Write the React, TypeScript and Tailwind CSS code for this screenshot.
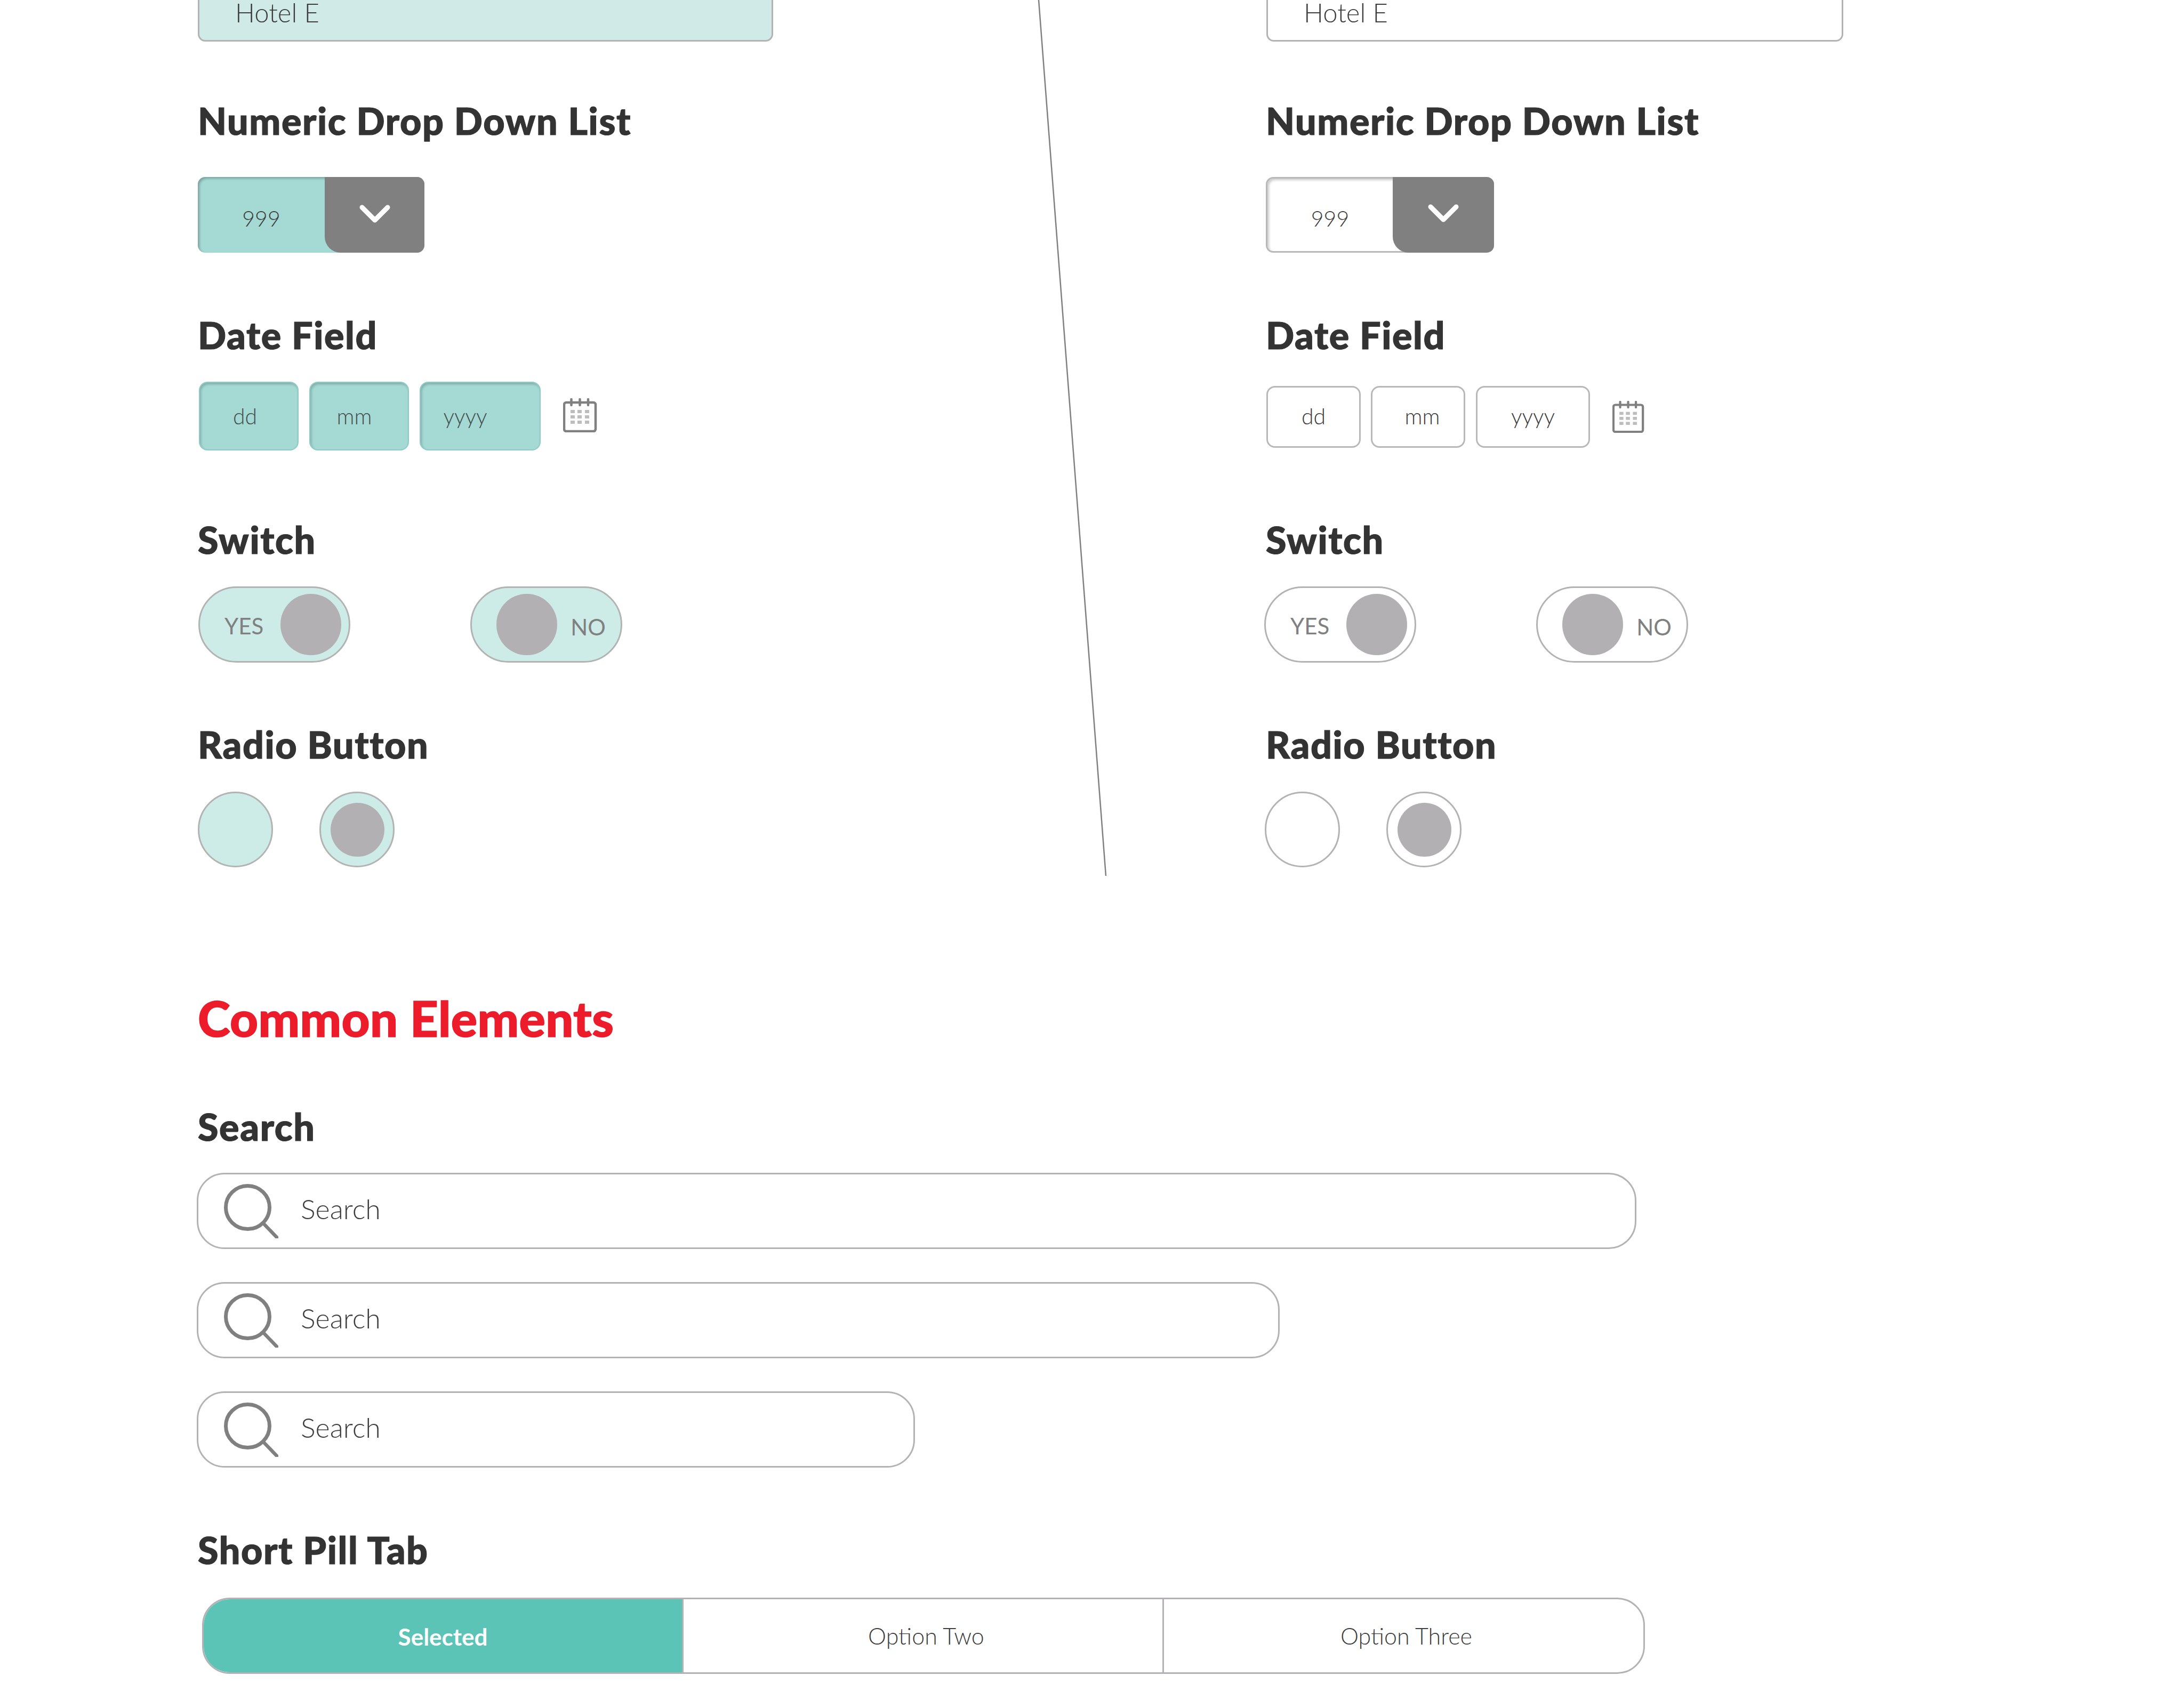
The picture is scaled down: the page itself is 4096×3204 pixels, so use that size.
import React from "react";

function Heading({ children, className = "" }: { children: React.ReactNode; className?: string }) {
  return (
    <h2 className={`h-[68px] text-[70px] leading-[68px] font-black tracking-[1.6px] text-[#333333] [-webkit-text-stroke:1.2px_#333333] ${className}`}>
      {children}
    </h2>
  );
}

function Chevron() {
  return (
    <svg width="58" height="35" viewBox="0 0 58 35" fill="none">
      <path d="M5 5 L29 29 L53 5" stroke="#ffffff" strokeWidth="9" strokeLinecap="round" strokeLinejoin="round" />
    </svg>
  );
}

function DropDown({ filled }: { filled: boolean }) {
  return (
    <div
      className={
        filled
          ? "flex h-[142px] w-[425px] rounded-[14px] bg-[#a4d9d4] shadow-[inset_3px_3px_4px_rgba(0,0,0,0.25)]"
          : "flex h-[142px] w-[428px] rounded-[14px] border-[3px] border-[#b8b8b8] bg-white shadow-[inset_3px_3px_4px_rgba(0,0,0,0.2)]"
      }
    >
      <div className="flex flex-1 items-center justify-center pt-[14px] text-[41px] font-light text-[#3d3d3d]">999</div>
      <div
        className={
          filled
            ? "flex w-[187px] items-center justify-center rounded-tr-[14px] rounded-br-[14px] rounded-bl-[30px] bg-[#808080] pb-[3px]"
            : "-my-[3px] -mr-[3px] flex w-[190px] items-center justify-center rounded-tr-[14px] rounded-br-[14px] rounded-bl-[30px] bg-[#808080] pb-[6px]"
        }
      >
        <Chevron />
      </div>
    </div>
  );
}

function CalendarIcon({ className = "" }: { className?: string }) {
  return (
    <svg className={className} width="64" height="64" viewBox="0 0 64 64" fill="none">
      <rect x="2" y="8" width="59" height="54" rx="4" stroke="#808080" strokeWidth="4.5" />
      <path d="M15.5 2 V13 M31.5 2 V13 M47 2 V13" stroke="#808080" strokeWidth="4.5" strokeLinecap="round" />
      <g fill="#bdbdbd">
        <rect x="14" y="22" width="8" height="6" />
        <rect x="27" y="22" width="8" height="6" />
        <rect x="41" y="22" width="8" height="6" />
        <rect x="14" y="32" width="8" height="6" />
        <rect x="27" y="32" width="8" height="6" />
        <rect x="41" y="32" width="8" height="6" />
        <rect x="14" y="42" width="8" height="6" />
        <rect x="27" y="42" width="8" height="6" />
        <rect x="41" y="42" width="8" height="6" />
      </g>
    </svg>
  );
}

function DateFilled() {
  const box =
    "flex h-[129px] items-center justify-center rounded-[16px] border-[2px] border-[#8fcbc5] bg-[#a4d9d4] text-[41px] font-light text-[#44504f] shadow-[inset_2px_3px_4px_rgba(0,0,0,0.2)]";
  return (
    <div className="mt-[54px] ml-[2px] flex h-[129px] items-start">
      <div className={`${box} w-[187px] pr-[14px]`}>dd</div>
      <div className={`${box} ml-[20px] w-[187px] pr-[18px]`}>mm</div>
      <div className={`${box} ml-[20px] w-[227px] pr-[56px]`}>yyyy</div>
      <CalendarIcon className="mt-[31px] ml-[42px]" />
    </div>
  );
}

function DateOutline() {
  const box =
    "flex h-[116px] items-center justify-center rounded-[16px] border-[3px] border-[#b8b8b8] bg-white pb-[3px] text-[41px] font-light text-[#3d3d3d]";
  return (
    <div className="mt-[62px] ml-[1px] flex h-[116px] items-start">
      <div className={`${box} w-[177px]`}>dd</div>
      <div className={`${box} ml-[19px] w-[177px] pl-[16px]`}>mm</div>
      <div className={`${box} ml-[20px] w-[214px]`}>yyyy</div>
      <CalendarIcon className="mt-[28px] ml-[42px] h-[60px] w-[60px]" />
    </div>
  );
}

function Switches({ filled }: { filled: boolean }) {
  const base = `flex h-[143px] w-[285px] items-center justify-between rounded-full border-[3px] border-[#b3b3b3] ${
    filled ? "bg-[#cdece8]" : "bg-white"
  }`;
  const knob = "h-[115px] w-[114px] rounded-full bg-[#b2b0b2]";
  return (
    <div className={`mt-[54px] flex gap-[225px] ${filled ? "ml-[1px]" : "-ml-[3px]"}`}>
      <div className={`${base} pr-[14px] pl-[46px]`}>
        <span className="pt-[6px] text-[42px] text-[#808080]">YES</span>
        <div className={knob} />
      </div>
      <div className={`${base} pr-[28px] pl-[46px]`}>
        <div className={knob} />
        <span className="pt-[10px] text-[42px] text-[#808080]">NO</span>
      </div>
    </div>
  );
}

function Radios({ filled }: { filled: boolean }) {
  const base = `flex h-[142px] w-[141px] items-center justify-center rounded-full border-[3px] border-[#b3b3b3] ${
    filled ? "bg-[#cdece8]" : "bg-white"
  }`;
  return (
    <div className={`mt-[55px] flex gap-[87px] ${filled ? "" : "-ml-[2px]"}`}>
      <div className={base} />
      <div className={base}>
        <div className="ml-[2px] h-[101px] w-[101px] rounded-full bg-[#b2b0b2]" />
      </div>
    </div>
  );
}

function FormColumn({ filled }: { filled: boolean }) {
  return (
    <div className="flex flex-col items-start">
      <div
        className={`-mt-[64px] flex h-[142px] rounded-[14px] border-[3px] border-[#b3b3b3] pl-[67px] ${
          filled ? "w-[1079px] bg-[#cfeae7]" : "ml-[1px] w-[1082px] bg-white"
        }`}
      >
        <span className="mt-[62px] h-[44px] text-[49px] leading-[44px] font-light text-[#3d3d3d]">Hotel E</span>
      </div>
      <Heading className="mt-[114px]">Numeric Drop Down List</Heading>
      <div className="mt-[72px]">
        <DropDown filled={filled} />
      </div>
      <Heading className="mt-[120px]">Date Field</Heading>
      {filled ? <DateFilled /> : <DateOutline />}
      <Heading className={filled ? "mt-[133px]" : "mt-[138px]"}>Switch</Heading>
      <Switches filled={filled} />
      <Heading className="mt-[119px]">Radio Button</Heading>
      <Radios filled={filled} />
    </div>
  );
}

function SearchIcon() {
  return (
    <svg className="shrink-0" width="102" height="102" viewBox="0 0 102 102" fill="none">
      <ellipse cx="44.5" cy="44" rx="41" ry="40.5" stroke="#808080" strokeWidth="7" />
      <path d="M74 74 L99 100" stroke="#808080" strokeWidth="6.5" strokeLinecap="round" />
    </svg>
  );
}

function SearchBar({ className }: { className: string }) {
  return (
    <div className={`flex h-[143px] items-center rounded-[52px] border-[3px] border-[#b3b3b3] bg-white pl-[48px] ${className}`}>
      <SearchIcon />
      <span className="ml-[42px] pb-[10px] text-[52px] font-light text-[#3d3d3d]">Search</span>
    </div>
  );
}

export default function App() {
  return (
    <div className="relative h-[3204px] w-[4096px] overflow-hidden bg-white font-[family-name:Lato,sans-serif]">
      <svg className="absolute top-0 left-[1940px]" width="140" height="1650" viewBox="0 0 140 1650" fill="none">
        <path d="M8 0 L134 1643" stroke="#808080" strokeWidth="2.5" />
      </svg>
      <div className="grid grid-cols-[2003px_1fr] pl-[371px]">
        <FormColumn filled />
        <FormColumn filled={false} />
      </div>
      <div className="flex flex-col items-start pl-[371px]">
        <h1 className="mt-[235px] h-[96px] text-[92px] leading-[96px] font-black tracking-[0.4px] text-[#ed1c2b] [-webkit-text-stroke:1.5px_#ed1c2b]">
          Common Elements
        </h1>
        <Heading className="mt-[121px]">Search</Heading>
        <SearchBar className="mt-[53px] -ml-[2px] w-[2700px]" />
        <SearchBar className="mt-[62px] -ml-[2px] w-[2031px]" />
        <SearchBar className="mt-[62px] -ml-[2px] w-[1347px]" />
        <Heading className="mt-[120px]">Short Pill Tab</Heading>
        <div className="mt-[56px] ml-[8px] flex h-[143px] w-[2706px] overflow-hidden rounded-[52px] border-[3px] border-[#b3b1b3] text-[43px]">
          <div className="flex w-[897px] items-center justify-center bg-[#5bc4b7] pt-[2px] text-[44px] font-bold text-white">Selected</div>
          <div className="flex w-[901px] items-center justify-center border-l-[3px] border-[#b3b1b3] pt-[2px] pl-[12px] font-light text-[#3d3d3d]">Option Two</div>
          <div className="flex flex-1 items-center justify-center border-l-[3px] border-[#b3b1b3] pt-[2px] pl-[10px] font-light text-[#3d3d3d]">Option Three</div>
        </div>
      </div>
    </div>
  );
}
